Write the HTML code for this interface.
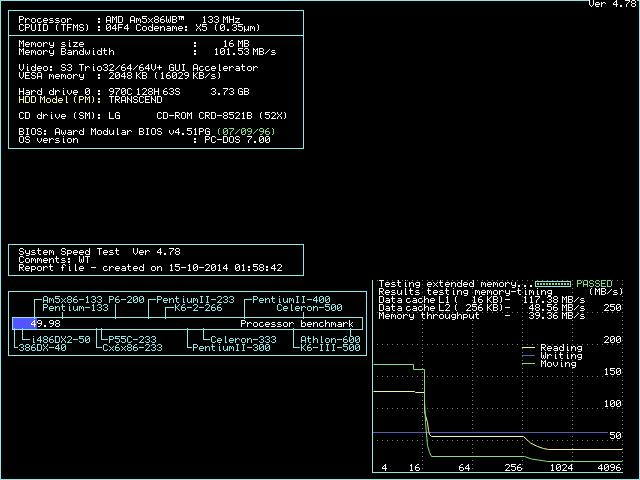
<!DOCTYPE html><html><head><meta charset="utf-8"><title>System Speed Test</title><style>html,body{margin:0;padding:0;background:#000;overflow:hidden;font-family:"Liberation Mono",monospace}svg{display:block}</style></head><body><svg width="640" height="480" viewBox="0 0 640 480" shape-rendering="crispEdges"><defs><path id="g0" d="M0 0h1v1h-1zM4 0h1v1h-1zM0 1h1v1h-1zM4 1h1v1h-1zM0 2h1v1h-1zM4 2h1v1h-1zM0 3h1v1h-1zM4 3h1v1h-1zM0 4h1v1h-1zM4 4h1v1h-1zM1 5h1v1h-1zM3 5h1v1h-1zM2 6h1v1h-1z"/><path id="g1" d="M1 2h3v1h-3zM0 3h1v1h-1zM4 3h1v1h-1zM0 4h5v1h-5zM0 5h1v1h-1zM1 6h3v1h-3z"/><path id="g2" d="M0 2h1v1h-1zM2 2h2v1h-2zM0 3h2v1h-2zM4 3h1v1h-1zM0 4h1v1h-1zM0 5h1v1h-1zM0 6h1v1h-1z"/><path id="g3" d="M3 0h1v1h-1zM2 1h2v1h-2zM1 2h1v1h-1zM3 2h1v1h-1zM0 3h1v1h-1zM3 3h1v1h-1zM0 4h5v1h-5zM3 5h1v1h-1zM3 6h1v1h-1z"/><path id="g4" d="M1 5h2v1h-2zM1 6h2v1h-2z"/><path id="g5" d="M0 0h5v1h-5zM4 1h1v1h-1zM3 2h1v1h-1zM2 3h1v1h-1zM1 4h1v1h-1zM1 5h1v1h-1zM1 6h1v1h-1z"/><path id="g6" d="M1 0h3v1h-3zM0 1h1v1h-1zM4 1h1v1h-1zM0 2h1v1h-1zM4 2h1v1h-1zM1 3h3v1h-3zM0 4h1v1h-1zM4 4h1v1h-1zM0 5h1v1h-1zM4 5h1v1h-1zM1 6h3v1h-3z"/><path id="g7" d="M0 0h4v1h-4zM0 1h1v1h-1zM4 1h1v1h-1zM0 2h1v1h-1zM4 2h1v1h-1zM0 3h4v1h-4zM0 4h1v1h-1zM0 5h1v1h-1zM0 6h1v1h-1z"/><path id="g8" d="M1 2h3v1h-3zM0 3h1v1h-1zM4 3h1v1h-1zM0 4h1v1h-1zM4 4h1v1h-1zM0 5h1v1h-1zM4 5h1v1h-1zM1 6h3v1h-3z"/><path id="g9" d="M1 2h3v1h-3zM0 3h1v1h-1zM0 4h1v1h-1zM0 5h1v1h-1zM4 5h1v1h-1zM1 6h3v1h-3z"/><path id="g10" d="M1 2h3v1h-3zM0 3h1v1h-1zM1 4h3v1h-3zM4 5h1v1h-1zM0 6h4v1h-4z"/><path id="g11" d="M1 2h2v1h-2zM1 3h2v1h-2zM1 5h2v1h-2zM1 6h2v1h-2z"/><path id="g12" d="M1 0h3v1h-3zM0 1h1v1h-1zM4 1h1v1h-1zM0 2h1v1h-1zM4 2h1v1h-1zM0 3h1v1h-1zM4 3h1v1h-1zM0 4h5v1h-5zM0 5h1v1h-1zM4 5h1v1h-1zM0 6h1v1h-1zM4 6h1v1h-1z"/><path id="g13" d="M0 0h1v1h-1zM4 0h1v1h-1zM0 1h2v1h-2zM3 1h2v1h-2zM0 2h1v1h-1zM2 2h1v1h-1zM4 2h1v1h-1zM0 3h1v1h-1zM2 3h1v1h-1zM4 3h1v1h-1zM0 4h1v1h-1zM4 4h1v1h-1zM0 5h1v1h-1zM4 5h1v1h-1zM0 6h1v1h-1zM4 6h1v1h-1z"/><path id="g14" d="M0 0h4v1h-4zM0 1h1v1h-1zM4 1h1v1h-1zM0 2h1v1h-1zM4 2h1v1h-1zM0 3h1v1h-1zM4 3h1v1h-1zM0 4h1v1h-1zM4 4h1v1h-1zM0 5h1v1h-1zM4 5h1v1h-1zM0 6h4v1h-4z"/><path id="g15" d="M0 2h2v1h-2zM3 2h1v1h-1zM0 3h1v1h-1zM2 3h1v1h-1zM4 3h1v1h-1zM0 4h1v1h-1zM2 4h1v1h-1zM4 4h1v1h-1zM0 5h1v1h-1zM4 5h1v1h-1zM0 6h1v1h-1zM4 6h1v1h-1z"/><path id="g16" d="M0 0h5v1h-5zM0 1h1v1h-1zM0 2h4v1h-4zM4 3h1v1h-1zM4 4h1v1h-1zM0 5h1v1h-1zM4 5h1v1h-1zM1 6h3v1h-3z"/><path id="g17" d="M0 2h1v1h-1zM4 2h1v1h-1zM1 3h1v1h-1zM3 3h1v1h-1zM2 4h1v1h-1zM1 5h1v1h-1zM3 5h1v1h-1zM0 6h1v1h-1zM4 6h1v1h-1z"/><path id="g18" d="M2 0h2v1h-2zM1 1h1v1h-1zM0 2h1v1h-1zM0 3h4v1h-4zM0 4h1v1h-1zM4 4h1v1h-1zM0 5h1v1h-1zM4 5h1v1h-1zM1 6h3v1h-3z"/><path id="g19" d="M0 0h1v1h-1zM4 0h1v1h-1zM0 1h1v1h-1zM4 1h1v1h-1zM0 2h1v1h-1zM4 2h1v1h-1zM0 3h1v1h-1zM2 3h1v1h-1zM4 3h1v1h-1zM0 4h1v1h-1zM2 4h1v1h-1zM4 4h1v1h-1zM0 5h1v1h-1zM2 5h1v1h-1zM4 5h1v1h-1zM1 6h1v1h-1zM3 6h1v1h-1z"/><path id="g20" d="M0 0h4v1h-4zM0 1h1v1h-1zM4 1h1v1h-1zM0 2h1v1h-1zM4 2h1v1h-1zM0 3h4v1h-4zM0 4h1v1h-1zM4 4h1v1h-1zM0 5h1v1h-1zM4 5h1v1h-1zM0 6h4v1h-4z"/><path id="g21" d="M0 0h6v1h-6zM1 1h1v1h-1zM3 1h3v1h-3zM1 2h1v1h-1zM3 2h1v1h-1zM5 2h1v1h-1zM1 3h1v1h-1zM3 3h1v1h-1zM5 3h1v1h-1z"/><path id="g22" d="M2 0h1v1h-1zM1 1h2v1h-2zM2 2h1v1h-1zM2 3h1v1h-1zM2 4h1v1h-1zM2 5h1v1h-1zM1 6h3v1h-3z"/><path id="g23" d="M1 0h3v1h-3zM0 1h1v1h-1zM4 1h1v1h-1zM4 2h1v1h-1zM2 3h2v1h-2zM4 4h1v1h-1zM0 5h1v1h-1zM4 5h1v1h-1zM1 6h3v1h-3z"/><path id="g24" d="M0 0h1v1h-1zM4 0h1v1h-1zM0 1h1v1h-1zM4 1h1v1h-1zM0 2h1v1h-1zM4 2h1v1h-1zM0 3h5v1h-5zM0 4h1v1h-1zM4 4h1v1h-1zM0 5h1v1h-1zM4 5h1v1h-1zM0 6h1v1h-1zM4 6h1v1h-1z"/><path id="g25" d="M0 2h5v1h-5zM3 3h1v1h-1zM2 4h1v1h-1zM1 5h1v1h-1zM0 6h5v1h-5z"/><path id="g26" d="M1 0h3v1h-3zM0 1h1v1h-1zM4 1h1v1h-1zM0 2h1v1h-1zM0 3h1v1h-1zM0 4h1v1h-1zM0 5h1v1h-1zM4 5h1v1h-1zM1 6h3v1h-3z"/><path id="g27" d="M0 0h1v1h-1zM4 0h1v1h-1zM0 1h1v1h-1zM4 1h1v1h-1zM0 2h1v1h-1zM4 2h1v1h-1zM0 3h1v1h-1zM4 3h1v1h-1zM0 4h1v1h-1zM4 4h1v1h-1zM0 5h1v1h-1zM4 5h1v1h-1zM1 6h3v1h-3z"/><path id="g28" d="M1 0h3v1h-3zM2 1h1v1h-1zM2 2h1v1h-1zM2 3h1v1h-1zM2 4h1v1h-1zM2 5h1v1h-1zM1 6h3v1h-3z"/><path id="g29" d="M2 0h1v1h-1zM1 1h1v1h-1zM1 2h1v1h-1zM1 3h1v1h-1zM1 4h1v1h-1zM1 5h1v1h-1zM2 6h1v1h-1z"/><path id="g30" d="M0 0h5v1h-5zM2 1h1v1h-1zM2 2h1v1h-1zM2 3h1v1h-1zM2 4h1v1h-1zM2 5h1v1h-1zM2 6h1v1h-1z"/><path id="g31" d="M0 0h5v1h-5zM0 1h1v1h-1zM0 2h1v1h-1zM0 3h4v1h-4zM0 4h1v1h-1zM0 5h1v1h-1zM0 6h1v1h-1z"/><path id="g32" d="M1 0h3v1h-3zM0 1h1v1h-1zM4 1h1v1h-1zM0 2h1v1h-1zM1 3h3v1h-3zM4 4h1v1h-1zM0 5h1v1h-1zM4 5h1v1h-1zM1 6h3v1h-3z"/><path id="g33" d="M1 0h1v1h-1zM2 1h1v1h-1zM2 2h1v1h-1zM2 3h1v1h-1zM2 4h1v1h-1zM2 5h1v1h-1zM1 6h1v1h-1z"/><path id="g34" d="M1 0h3v1h-3zM0 1h1v1h-1zM4 1h1v1h-1zM0 2h1v1h-1zM3 2h2v1h-2zM0 3h1v1h-1zM2 3h1v1h-1zM4 3h1v1h-1zM0 4h2v1h-2zM4 4h1v1h-1zM0 5h1v1h-1zM4 5h1v1h-1zM1 6h3v1h-3z"/><path id="g35" d="M4 0h1v1h-1zM4 1h1v1h-1zM1 2h2v1h-2zM4 2h1v1h-1zM0 3h1v1h-1zM3 3h2v1h-2zM0 4h1v1h-1zM4 4h1v1h-1zM0 5h1v1h-1zM4 5h1v1h-1zM1 6h4v1h-4z"/><path id="g36" d="M0 2h1v1h-1zM2 2h2v1h-2zM0 3h2v1h-2zM4 3h1v1h-1zM0 4h1v1h-1zM4 4h1v1h-1zM0 5h1v1h-1zM4 5h1v1h-1zM0 6h1v1h-1zM4 6h1v1h-1z"/><path id="g37" d="M1 2h3v1h-3zM4 3h1v1h-1zM1 4h4v1h-4zM0 5h1v1h-1zM4 5h1v1h-1zM1 6h4v1h-4z"/><path id="g38" d="M0 0h1v1h-1zM4 0h1v1h-1zM0 1h1v1h-1zM4 1h1v1h-1zM1 2h1v1h-1zM3 2h1v1h-1zM2 3h1v1h-1zM1 4h1v1h-1zM3 4h1v1h-1zM0 5h1v1h-1zM4 5h1v1h-1zM0 6h1v1h-1zM4 6h1v1h-1z"/><path id="g39" d="M0 2h1v1h-1zM4 2h1v1h-1zM0 3h1v1h-1zM4 3h1v1h-1zM0 4h1v1h-1zM4 4h1v1h-1zM0 5h2v1h-2zM3 5h2v1h-2zM0 6h1v1h-1zM2 6h1v1h-1zM4 6h1v1h-1zM0 7h1v1h-1z"/><path id="g40" d="M0 2h1v1h-1zM4 2h1v1h-1zM0 3h1v1h-1zM4 3h1v1h-1zM0 4h1v1h-1zM4 4h1v1h-1zM1 5h4v1h-4zM4 6h1v1h-1zM1 7h3v1h-3z"/><path id="g41" d="M2 0h1v1h-1zM2 2h1v1h-1zM2 3h1v1h-1zM2 4h1v1h-1zM2 5h1v1h-1zM2 6h2v1h-2z"/><path id="g42" d="M0 2h1v1h-1zM4 2h1v1h-1zM0 3h1v1h-1zM4 3h1v1h-1zM0 4h1v1h-1zM2 4h1v1h-1zM4 4h1v1h-1zM0 5h1v1h-1zM2 5h1v1h-1zM4 5h1v1h-1zM1 6h1v1h-1zM3 6h1v1h-1z"/><path id="g43" d="M1 0h1v1h-1zM1 1h1v1h-1zM0 2h4v1h-4zM1 3h1v1h-1zM1 4h1v1h-1zM1 5h1v1h-1zM2 6h2v1h-2z"/><path id="g44" d="M0 0h1v1h-1zM0 1h1v1h-1zM0 2h1v1h-1zM2 2h2v1h-2zM0 3h2v1h-2zM4 3h1v1h-1zM0 4h1v1h-1zM4 4h1v1h-1zM0 5h1v1h-1zM4 5h1v1h-1zM0 6h1v1h-1zM4 6h1v1h-1z"/><path id="g45" d="M4 1h1v1h-1zM3 2h1v1h-1zM2 3h1v1h-1zM1 4h1v1h-1zM0 5h1v1h-1z"/><path id="g46" d="M1 0h3v1h-3zM0 1h1v1h-1zM4 1h1v1h-1zM4 2h1v1h-1zM3 3h1v1h-1zM2 4h1v1h-1zM1 5h1v1h-1zM0 6h5v1h-5z"/><path id="g47" d="M2 1h1v1h-1zM2 2h1v1h-1zM0 3h5v1h-5zM2 4h1v1h-1zM2 5h1v1h-1z"/><path id="g48" d="M1 0h3v1h-3zM0 1h1v1h-1zM4 1h1v1h-1zM0 2h1v1h-1zM0 3h1v1h-1zM2 3h3v1h-3zM0 4h1v1h-1zM4 4h1v1h-1zM0 5h1v1h-1zM4 5h1v1h-1zM1 6h4v1h-4z"/><path id="g49" d="M2 0h1v1h-1zM2 1h1v1h-1zM2 2h1v1h-1zM2 3h1v1h-1zM2 4h1v1h-1zM2 5h1v1h-1zM2 6h2v1h-2z"/><path id="g50" d="M0 0h5v1h-5zM0 1h1v1h-1zM0 2h1v1h-1zM0 3h4v1h-4zM0 4h1v1h-1zM0 5h1v1h-1zM0 6h5v1h-5z"/><path id="g51" d="M0 0h1v1h-1zM4 0h1v1h-1zM0 1h1v1h-1zM3 1h1v1h-1zM0 2h1v1h-1zM2 2h1v1h-1zM0 3h2v1h-2zM0 4h1v1h-1zM2 4h1v1h-1zM0 5h1v1h-1zM3 5h1v1h-1zM0 6h1v1h-1zM4 6h1v1h-1z"/><path id="g52" d="M1 0h3v1h-3zM0 1h1v1h-1zM4 1h1v1h-1zM0 2h1v1h-1zM4 2h1v1h-1zM1 3h4v1h-4zM4 4h1v1h-1zM3 5h1v1h-1zM1 6h2v1h-2z"/><path id="g53" d="M0 2h1v1h-1zM4 2h1v1h-1zM0 3h1v1h-1zM4 3h1v1h-1zM0 4h1v1h-1zM4 4h1v1h-1zM1 5h1v1h-1zM3 5h1v1h-1zM2 6h1v1h-1z"/><path id="g54" d="M0 0h4v1h-4zM0 1h1v1h-1zM4 1h1v1h-1zM0 2h1v1h-1zM4 2h1v1h-1zM0 3h4v1h-4zM0 4h1v1h-1zM2 4h1v1h-1zM0 5h1v1h-1zM3 5h1v1h-1zM0 6h1v1h-1zM4 6h1v1h-1z"/><path id="g55" d="M0 0h1v1h-1zM4 0h1v1h-1zM0 1h1v1h-1zM4 1h1v1h-1zM0 2h2v1h-2zM4 2h1v1h-1zM0 3h1v1h-1zM2 3h1v1h-1zM4 3h1v1h-1zM0 4h1v1h-1zM3 4h2v1h-2zM0 5h1v1h-1zM4 5h1v1h-1zM0 6h1v1h-1zM4 6h1v1h-1z"/><path id="g56" d="M0 0h1v1h-1zM0 1h1v1h-1zM0 2h1v1h-1zM0 3h1v1h-1zM0 4h1v1h-1zM0 5h1v1h-1zM0 6h5v1h-5z"/><path id="g57" d="M0 3h5v1h-5z"/><path id="g58" d="M1 0h3v1h-3zM0 1h1v1h-1zM4 1h1v1h-1zM0 2h1v1h-1zM4 2h1v1h-1zM0 3h1v1h-1zM4 3h1v1h-1zM0 4h1v1h-1zM4 4h1v1h-1zM0 5h1v1h-1zM4 5h1v1h-1zM1 6h3v1h-3z"/><path id="g59" d="M0 2h1v1h-1zM4 2h1v1h-1zM0 3h1v1h-1zM4 3h1v1h-1zM0 4h1v1h-1zM4 4h1v1h-1zM0 5h1v1h-1zM3 5h2v1h-2zM1 6h2v1h-2zM4 6h1v1h-1z"/><path id="g60" d="M0 2h4v1h-4zM0 3h1v1h-1zM4 3h1v1h-1zM0 4h1v1h-1zM4 4h1v1h-1zM0 5h4v1h-4zM0 6h1v1h-1zM0 7h1v1h-1z"/><path id="g61" d="M2 0h2v1h-2zM1 1h1v1h-1zM4 1h1v1h-1zM1 2h1v1h-1zM0 3h3v1h-3zM1 4h1v1h-1zM1 5h1v1h-1zM1 6h1v1h-1z"/><path id="g62" d="M0 0h1v1h-1zM0 1h1v1h-1zM0 2h1v1h-1zM2 2h2v1h-2zM0 3h2v1h-2zM4 3h1v1h-1zM0 4h1v1h-1zM4 4h1v1h-1zM0 5h1v1h-1zM4 5h1v1h-1zM0 6h4v1h-4z"/><path id="g63" d="M0 0h1v1h-1zM0 1h1v1h-1zM0 2h1v1h-1zM3 2h1v1h-1zM0 3h1v1h-1zM2 3h1v1h-1zM0 4h2v1h-2zM0 5h1v1h-1zM2 5h1v1h-1zM0 6h1v1h-1zM3 6h1v1h-1z"/><path id="g64" d="M1 2h4v1h-4zM0 3h1v1h-1zM4 3h1v1h-1zM0 4h1v1h-1zM4 4h1v1h-1zM1 5h4v1h-4zM4 6h1v1h-1zM1 7h3v1h-3z"/></defs><rect width="640" height="480" fill="#000"/><rect x="0" y="0" width="640" height="1" fill="#8ee8e8"/><rect x="0" y="479" width="640" height="1" fill="#8ee8e8"/><rect x="0" y="0" width="1" height="480" fill="#8ee8e8"/><rect x="639" y="0" width="1" height="480" fill="#8ee8e8"/><rect x="589" y="0" width="48" height="8" fill="#000"/><rect x="8" y="10" width="296" height="1" fill="#8ee8e8"/><rect x="8" y="148" width="296" height="1" fill="#8ee8e8"/><rect x="8" y="10" width="1" height="139" fill="#8ee8e8"/><rect x="303" y="10" width="1" height="139" fill="#8ee8e8"/><rect x="8" y="35" width="296" height="1" fill="#8ee8e8"/><rect x="8" y="244" width="296" height="1" fill="#8ee8e8"/><rect x="8" y="275" width="296" height="1" fill="#8ee8e8"/><rect x="8" y="244" width="1" height="32" fill="#8ee8e8"/><rect x="303" y="244" width="1" height="32" fill="#8ee8e8"/><rect x="8" y="291" width="359" height="1" fill="#8ee8e8"/><rect x="8" y="355" width="359" height="1" fill="#8ee8e8"/><rect x="8" y="291" width="1" height="65" fill="#8ee8e8"/><rect x="366" y="291" width="1" height="65" fill="#8ee8e8"/><rect x="12" y="317" width="351" height="1" fill="#8ee8e8"/><rect x="12" y="329" width="351" height="1" fill="#8ee8e8"/><rect x="12" y="317" width="1" height="13" fill="#8ee8e8"/><rect x="362" y="317" width="1" height="13" fill="#8ee8e8"/><rect x="13" y="318" width="24" height="11" fill="#5555ff"/><rect x="34" y="299" width="8" height="1" fill="#8ee8e8"/><rect x="34" y="299" width="1" height="20" fill="#8ee8e8"/><rect x="115" y="304" width="1" height="15" fill="#8ee8e8"/><rect x="148" y="299" width="8" height="1" fill="#8ee8e8"/><rect x="148" y="299" width="1" height="20" fill="#8ee8e8"/><rect x="244" y="299" width="8" height="1" fill="#8ee8e8"/><rect x="244" y="299" width="1" height="20" fill="#8ee8e8"/><rect x="62" y="312" width="1" height="7" fill="#8ee8e8"/><rect x="165" y="307" width="9" height="1" fill="#8ee8e8"/><rect x="165" y="307" width="1" height="12" fill="#8ee8e8"/><rect x="303" y="312" width="1" height="7" fill="#8ee8e8"/><rect x="22" y="328" width="1" height="12" fill="#8ee8e8"/><rect x="22" y="339" width="8" height="1" fill="#8ee8e8"/><rect x="101" y="328" width="1" height="12" fill="#8ee8e8"/><rect x="101" y="339" width="7" height="1" fill="#8ee8e8"/><rect x="203" y="328" width="1" height="12" fill="#8ee8e8"/><rect x="203" y="339" width="7" height="1" fill="#8ee8e8"/><rect x="350" y="328" width="1" height="8" fill="#8ee8e8"/><rect x="14" y="328" width="1" height="20" fill="#8ee8e8"/><rect x="14" y="347" width="4" height="1" fill="#8ee8e8"/><rect x="96" y="328" width="1" height="20" fill="#8ee8e8"/><rect x="96" y="347" width="6" height="1" fill="#8ee8e8"/><rect x="187" y="328" width="1" height="20" fill="#8ee8e8"/><rect x="187" y="347" width="5" height="1" fill="#8ee8e8"/><rect x="293" y="328" width="1" height="20" fill="#8ee8e8"/><rect x="293" y="347" width="7" height="1" fill="#8ee8e8"/><rect x="377" y="280" width="1" height="1" fill="#7c827e"/><rect x="382" y="280" width="1" height="1" fill="#7c827e"/><rect x="387" y="280" width="1" height="1" fill="#7c827e"/><rect x="392" y="280" width="1" height="1" fill="#7c827e"/><rect x="397" y="280" width="1" height="1" fill="#7c827e"/><rect x="402" y="280" width="1" height="1" fill="#7c827e"/><rect x="407" y="280" width="1" height="1" fill="#7c827e"/><rect x="412" y="280" width="1" height="1" fill="#7c827e"/><rect x="417" y="280" width="1" height="1" fill="#7c827e"/><rect x="422" y="280" width="1" height="1" fill="#7c827e"/><rect x="427" y="280" width="1" height="1" fill="#7c827e"/><rect x="432" y="280" width="1" height="1" fill="#7c827e"/><rect x="437" y="280" width="1" height="1" fill="#7c827e"/><rect x="442" y="280" width="1" height="1" fill="#7c827e"/><rect x="447" y="280" width="1" height="1" fill="#7c827e"/><rect x="452" y="280" width="1" height="1" fill="#7c827e"/><rect x="457" y="280" width="1" height="1" fill="#7c827e"/><rect x="462" y="280" width="1" height="1" fill="#7c827e"/><rect x="467" y="280" width="1" height="1" fill="#7c827e"/><rect x="472" y="280" width="1" height="1" fill="#7c827e"/><rect x="477" y="280" width="1" height="1" fill="#7c827e"/><rect x="482" y="280" width="1" height="1" fill="#7c827e"/><rect x="487" y="280" width="1" height="1" fill="#7c827e"/><rect x="492" y="280" width="1" height="1" fill="#7c827e"/><rect x="497" y="280" width="1" height="1" fill="#7c827e"/><rect x="502" y="280" width="1" height="1" fill="#7c827e"/><rect x="507" y="280" width="1" height="1" fill="#7c827e"/><rect x="512" y="280" width="1" height="1" fill="#7c827e"/><rect x="517" y="280" width="1" height="1" fill="#7c827e"/><rect x="522" y="280" width="1" height="1" fill="#7c827e"/><rect x="527" y="280" width="1" height="1" fill="#7c827e"/><rect x="532" y="280" width="1" height="1" fill="#7c827e"/><rect x="537" y="280" width="1" height="1" fill="#7c827e"/><rect x="542" y="280" width="1" height="1" fill="#7c827e"/><rect x="547" y="280" width="1" height="1" fill="#7c827e"/><rect x="552" y="280" width="1" height="1" fill="#7c827e"/><rect x="557" y="280" width="1" height="1" fill="#7c827e"/><rect x="562" y="280" width="1" height="1" fill="#7c827e"/><rect x="567" y="280" width="1" height="1" fill="#7c827e"/><rect x="572" y="280" width="1" height="1" fill="#7c827e"/><rect x="577" y="280" width="1" height="1" fill="#7c827e"/><rect x="582" y="280" width="1" height="1" fill="#7c827e"/><rect x="587" y="280" width="1" height="1" fill="#7c827e"/><rect x="592" y="280" width="1" height="1" fill="#7c827e"/><rect x="597" y="280" width="1" height="1" fill="#7c827e"/><rect x="602" y="280" width="1" height="1" fill="#7c827e"/><rect x="607" y="280" width="1" height="1" fill="#7c827e"/><rect x="612" y="280" width="1" height="1" fill="#7c827e"/><rect x="617" y="280" width="1" height="1" fill="#7c827e"/><rect x="622" y="280" width="1" height="1" fill="#7c827e"/><rect x="377" y="312" width="1" height="1" fill="#7c827e"/><rect x="382" y="312" width="1" height="1" fill="#7c827e"/><rect x="387" y="312" width="1" height="1" fill="#7c827e"/><rect x="392" y="312" width="1" height="1" fill="#7c827e"/><rect x="397" y="312" width="1" height="1" fill="#7c827e"/><rect x="402" y="312" width="1" height="1" fill="#7c827e"/><rect x="407" y="312" width="1" height="1" fill="#7c827e"/><rect x="412" y="312" width="1" height="1" fill="#7c827e"/><rect x="417" y="312" width="1" height="1" fill="#7c827e"/><rect x="422" y="312" width="1" height="1" fill="#7c827e"/><rect x="427" y="312" width="1" height="1" fill="#7c827e"/><rect x="432" y="312" width="1" height="1" fill="#7c827e"/><rect x="437" y="312" width="1" height="1" fill="#7c827e"/><rect x="442" y="312" width="1" height="1" fill="#7c827e"/><rect x="447" y="312" width="1" height="1" fill="#7c827e"/><rect x="452" y="312" width="1" height="1" fill="#7c827e"/><rect x="457" y="312" width="1" height="1" fill="#7c827e"/><rect x="462" y="312" width="1" height="1" fill="#7c827e"/><rect x="467" y="312" width="1" height="1" fill="#7c827e"/><rect x="472" y="312" width="1" height="1" fill="#7c827e"/><rect x="477" y="312" width="1" height="1" fill="#7c827e"/><rect x="482" y="312" width="1" height="1" fill="#7c827e"/><rect x="487" y="312" width="1" height="1" fill="#7c827e"/><rect x="492" y="312" width="1" height="1" fill="#7c827e"/><rect x="497" y="312" width="1" height="1" fill="#7c827e"/><rect x="502" y="312" width="1" height="1" fill="#7c827e"/><rect x="507" y="312" width="1" height="1" fill="#7c827e"/><rect x="512" y="312" width="1" height="1" fill="#7c827e"/><rect x="517" y="312" width="1" height="1" fill="#7c827e"/><rect x="522" y="312" width="1" height="1" fill="#7c827e"/><rect x="527" y="312" width="1" height="1" fill="#7c827e"/><rect x="532" y="312" width="1" height="1" fill="#7c827e"/><rect x="537" y="312" width="1" height="1" fill="#7c827e"/><rect x="542" y="312" width="1" height="1" fill="#7c827e"/><rect x="547" y="312" width="1" height="1" fill="#7c827e"/><rect x="552" y="312" width="1" height="1" fill="#7c827e"/><rect x="557" y="312" width="1" height="1" fill="#7c827e"/><rect x="562" y="312" width="1" height="1" fill="#7c827e"/><rect x="567" y="312" width="1" height="1" fill="#7c827e"/><rect x="572" y="312" width="1" height="1" fill="#7c827e"/><rect x="577" y="312" width="1" height="1" fill="#7c827e"/><rect x="582" y="312" width="1" height="1" fill="#7c827e"/><rect x="587" y="312" width="1" height="1" fill="#7c827e"/><rect x="592" y="312" width="1" height="1" fill="#7c827e"/><rect x="597" y="312" width="1" height="1" fill="#7c827e"/><rect x="602" y="312" width="1" height="1" fill="#7c827e"/><rect x="607" y="312" width="1" height="1" fill="#7c827e"/><rect x="612" y="312" width="1" height="1" fill="#7c827e"/><rect x="617" y="312" width="1" height="1" fill="#7c827e"/><rect x="622" y="312" width="1" height="1" fill="#7c827e"/><rect x="377" y="344" width="1" height="1" fill="#7c827e"/><rect x="382" y="344" width="1" height="1" fill="#7c827e"/><rect x="387" y="344" width="1" height="1" fill="#7c827e"/><rect x="392" y="344" width="1" height="1" fill="#7c827e"/><rect x="397" y="344" width="1" height="1" fill="#7c827e"/><rect x="402" y="344" width="1" height="1" fill="#7c827e"/><rect x="407" y="344" width="1" height="1" fill="#7c827e"/><rect x="412" y="344" width="1" height="1" fill="#7c827e"/><rect x="417" y="344" width="1" height="1" fill="#7c827e"/><rect x="422" y="344" width="1" height="1" fill="#7c827e"/><rect x="427" y="344" width="1" height="1" fill="#7c827e"/><rect x="432" y="344" width="1" height="1" fill="#7c827e"/><rect x="437" y="344" width="1" height="1" fill="#7c827e"/><rect x="442" y="344" width="1" height="1" fill="#7c827e"/><rect x="447" y="344" width="1" height="1" fill="#7c827e"/><rect x="452" y="344" width="1" height="1" fill="#7c827e"/><rect x="457" y="344" width="1" height="1" fill="#7c827e"/><rect x="462" y="344" width="1" height="1" fill="#7c827e"/><rect x="467" y="344" width="1" height="1" fill="#7c827e"/><rect x="472" y="344" width="1" height="1" fill="#7c827e"/><rect x="477" y="344" width="1" height="1" fill="#7c827e"/><rect x="482" y="344" width="1" height="1" fill="#7c827e"/><rect x="487" y="344" width="1" height="1" fill="#7c827e"/><rect x="492" y="344" width="1" height="1" fill="#7c827e"/><rect x="497" y="344" width="1" height="1" fill="#7c827e"/><rect x="502" y="344" width="1" height="1" fill="#7c827e"/><rect x="507" y="344" width="1" height="1" fill="#7c827e"/><rect x="512" y="344" width="1" height="1" fill="#7c827e"/><rect x="517" y="344" width="1" height="1" fill="#7c827e"/><rect x="522" y="344" width="1" height="1" fill="#7c827e"/><rect x="527" y="344" width="1" height="1" fill="#7c827e"/><rect x="532" y="344" width="1" height="1" fill="#7c827e"/><rect x="537" y="344" width="1" height="1" fill="#7c827e"/><rect x="542" y="344" width="1" height="1" fill="#7c827e"/><rect x="547" y="344" width="1" height="1" fill="#7c827e"/><rect x="552" y="344" width="1" height="1" fill="#7c827e"/><rect x="557" y="344" width="1" height="1" fill="#7c827e"/><rect x="562" y="344" width="1" height="1" fill="#7c827e"/><rect x="567" y="344" width="1" height="1" fill="#7c827e"/><rect x="572" y="344" width="1" height="1" fill="#7c827e"/><rect x="577" y="344" width="1" height="1" fill="#7c827e"/><rect x="582" y="344" width="1" height="1" fill="#7c827e"/><rect x="587" y="344" width="1" height="1" fill="#7c827e"/><rect x="592" y="344" width="1" height="1" fill="#7c827e"/><rect x="597" y="344" width="1" height="1" fill="#7c827e"/><rect x="602" y="344" width="1" height="1" fill="#7c827e"/><rect x="607" y="344" width="1" height="1" fill="#7c827e"/><rect x="612" y="344" width="1" height="1" fill="#7c827e"/><rect x="617" y="344" width="1" height="1" fill="#7c827e"/><rect x="622" y="344" width="1" height="1" fill="#7c827e"/><rect x="377" y="376" width="1" height="1" fill="#7c827e"/><rect x="382" y="376" width="1" height="1" fill="#7c827e"/><rect x="387" y="376" width="1" height="1" fill="#7c827e"/><rect x="392" y="376" width="1" height="1" fill="#7c827e"/><rect x="397" y="376" width="1" height="1" fill="#7c827e"/><rect x="402" y="376" width="1" height="1" fill="#7c827e"/><rect x="407" y="376" width="1" height="1" fill="#7c827e"/><rect x="412" y="376" width="1" height="1" fill="#7c827e"/><rect x="417" y="376" width="1" height="1" fill="#7c827e"/><rect x="422" y="376" width="1" height="1" fill="#7c827e"/><rect x="427" y="376" width="1" height="1" fill="#7c827e"/><rect x="432" y="376" width="1" height="1" fill="#7c827e"/><rect x="437" y="376" width="1" height="1" fill="#7c827e"/><rect x="442" y="376" width="1" height="1" fill="#7c827e"/><rect x="447" y="376" width="1" height="1" fill="#7c827e"/><rect x="452" y="376" width="1" height="1" fill="#7c827e"/><rect x="457" y="376" width="1" height="1" fill="#7c827e"/><rect x="462" y="376" width="1" height="1" fill="#7c827e"/><rect x="467" y="376" width="1" height="1" fill="#7c827e"/><rect x="472" y="376" width="1" height="1" fill="#7c827e"/><rect x="477" y="376" width="1" height="1" fill="#7c827e"/><rect x="482" y="376" width="1" height="1" fill="#7c827e"/><rect x="487" y="376" width="1" height="1" fill="#7c827e"/><rect x="492" y="376" width="1" height="1" fill="#7c827e"/><rect x="497" y="376" width="1" height="1" fill="#7c827e"/><rect x="502" y="376" width="1" height="1" fill="#7c827e"/><rect x="507" y="376" width="1" height="1" fill="#7c827e"/><rect x="512" y="376" width="1" height="1" fill="#7c827e"/><rect x="517" y="376" width="1" height="1" fill="#7c827e"/><rect x="522" y="376" width="1" height="1" fill="#7c827e"/><rect x="527" y="376" width="1" height="1" fill="#7c827e"/><rect x="532" y="376" width="1" height="1" fill="#7c827e"/><rect x="537" y="376" width="1" height="1" fill="#7c827e"/><rect x="542" y="376" width="1" height="1" fill="#7c827e"/><rect x="547" y="376" width="1" height="1" fill="#7c827e"/><rect x="552" y="376" width="1" height="1" fill="#7c827e"/><rect x="557" y="376" width="1" height="1" fill="#7c827e"/><rect x="562" y="376" width="1" height="1" fill="#7c827e"/><rect x="567" y="376" width="1" height="1" fill="#7c827e"/><rect x="572" y="376" width="1" height="1" fill="#7c827e"/><rect x="577" y="376" width="1" height="1" fill="#7c827e"/><rect x="582" y="376" width="1" height="1" fill="#7c827e"/><rect x="587" y="376" width="1" height="1" fill="#7c827e"/><rect x="592" y="376" width="1" height="1" fill="#7c827e"/><rect x="597" y="376" width="1" height="1" fill="#7c827e"/><rect x="602" y="376" width="1" height="1" fill="#7c827e"/><rect x="607" y="376" width="1" height="1" fill="#7c827e"/><rect x="612" y="376" width="1" height="1" fill="#7c827e"/><rect x="617" y="376" width="1" height="1" fill="#7c827e"/><rect x="622" y="376" width="1" height="1" fill="#7c827e"/><rect x="377" y="408" width="1" height="1" fill="#7c827e"/><rect x="382" y="408" width="1" height="1" fill="#7c827e"/><rect x="387" y="408" width="1" height="1" fill="#7c827e"/><rect x="392" y="408" width="1" height="1" fill="#7c827e"/><rect x="397" y="408" width="1" height="1" fill="#7c827e"/><rect x="402" y="408" width="1" height="1" fill="#7c827e"/><rect x="407" y="408" width="1" height="1" fill="#7c827e"/><rect x="412" y="408" width="1" height="1" fill="#7c827e"/><rect x="417" y="408" width="1" height="1" fill="#7c827e"/><rect x="422" y="408" width="1" height="1" fill="#7c827e"/><rect x="427" y="408" width="1" height="1" fill="#7c827e"/><rect x="432" y="408" width="1" height="1" fill="#7c827e"/><rect x="437" y="408" width="1" height="1" fill="#7c827e"/><rect x="442" y="408" width="1" height="1" fill="#7c827e"/><rect x="447" y="408" width="1" height="1" fill="#7c827e"/><rect x="452" y="408" width="1" height="1" fill="#7c827e"/><rect x="457" y="408" width="1" height="1" fill="#7c827e"/><rect x="462" y="408" width="1" height="1" fill="#7c827e"/><rect x="467" y="408" width="1" height="1" fill="#7c827e"/><rect x="472" y="408" width="1" height="1" fill="#7c827e"/><rect x="477" y="408" width="1" height="1" fill="#7c827e"/><rect x="482" y="408" width="1" height="1" fill="#7c827e"/><rect x="487" y="408" width="1" height="1" fill="#7c827e"/><rect x="492" y="408" width="1" height="1" fill="#7c827e"/><rect x="497" y="408" width="1" height="1" fill="#7c827e"/><rect x="502" y="408" width="1" height="1" fill="#7c827e"/><rect x="507" y="408" width="1" height="1" fill="#7c827e"/><rect x="512" y="408" width="1" height="1" fill="#7c827e"/><rect x="517" y="408" width="1" height="1" fill="#7c827e"/><rect x="522" y="408" width="1" height="1" fill="#7c827e"/><rect x="527" y="408" width="1" height="1" fill="#7c827e"/><rect x="532" y="408" width="1" height="1" fill="#7c827e"/><rect x="537" y="408" width="1" height="1" fill="#7c827e"/><rect x="542" y="408" width="1" height="1" fill="#7c827e"/><rect x="547" y="408" width="1" height="1" fill="#7c827e"/><rect x="552" y="408" width="1" height="1" fill="#7c827e"/><rect x="557" y="408" width="1" height="1" fill="#7c827e"/><rect x="562" y="408" width="1" height="1" fill="#7c827e"/><rect x="567" y="408" width="1" height="1" fill="#7c827e"/><rect x="572" y="408" width="1" height="1" fill="#7c827e"/><rect x="577" y="408" width="1" height="1" fill="#7c827e"/><rect x="582" y="408" width="1" height="1" fill="#7c827e"/><rect x="587" y="408" width="1" height="1" fill="#7c827e"/><rect x="592" y="408" width="1" height="1" fill="#7c827e"/><rect x="597" y="408" width="1" height="1" fill="#7c827e"/><rect x="602" y="408" width="1" height="1" fill="#7c827e"/><rect x="607" y="408" width="1" height="1" fill="#7c827e"/><rect x="612" y="408" width="1" height="1" fill="#7c827e"/><rect x="617" y="408" width="1" height="1" fill="#7c827e"/><rect x="622" y="408" width="1" height="1" fill="#7c827e"/><rect x="377" y="440" width="1" height="1" fill="#7c827e"/><rect x="382" y="440" width="1" height="1" fill="#7c827e"/><rect x="387" y="440" width="1" height="1" fill="#7c827e"/><rect x="392" y="440" width="1" height="1" fill="#7c827e"/><rect x="397" y="440" width="1" height="1" fill="#7c827e"/><rect x="402" y="440" width="1" height="1" fill="#7c827e"/><rect x="407" y="440" width="1" height="1" fill="#7c827e"/><rect x="412" y="440" width="1" height="1" fill="#7c827e"/><rect x="417" y="440" width="1" height="1" fill="#7c827e"/><rect x="422" y="440" width="1" height="1" fill="#7c827e"/><rect x="427" y="440" width="1" height="1" fill="#7c827e"/><rect x="432" y="440" width="1" height="1" fill="#7c827e"/><rect x="437" y="440" width="1" height="1" fill="#7c827e"/><rect x="442" y="440" width="1" height="1" fill="#7c827e"/><rect x="447" y="440" width="1" height="1" fill="#7c827e"/><rect x="452" y="440" width="1" height="1" fill="#7c827e"/><rect x="457" y="440" width="1" height="1" fill="#7c827e"/><rect x="462" y="440" width="1" height="1" fill="#7c827e"/><rect x="467" y="440" width="1" height="1" fill="#7c827e"/><rect x="472" y="440" width="1" height="1" fill="#7c827e"/><rect x="477" y="440" width="1" height="1" fill="#7c827e"/><rect x="482" y="440" width="1" height="1" fill="#7c827e"/><rect x="487" y="440" width="1" height="1" fill="#7c827e"/><rect x="492" y="440" width="1" height="1" fill="#7c827e"/><rect x="497" y="440" width="1" height="1" fill="#7c827e"/><rect x="502" y="440" width="1" height="1" fill="#7c827e"/><rect x="507" y="440" width="1" height="1" fill="#7c827e"/><rect x="512" y="440" width="1" height="1" fill="#7c827e"/><rect x="517" y="440" width="1" height="1" fill="#7c827e"/><rect x="522" y="440" width="1" height="1" fill="#7c827e"/><rect x="527" y="440" width="1" height="1" fill="#7c827e"/><rect x="532" y="440" width="1" height="1" fill="#7c827e"/><rect x="537" y="440" width="1" height="1" fill="#7c827e"/><rect x="542" y="440" width="1" height="1" fill="#7c827e"/><rect x="547" y="440" width="1" height="1" fill="#7c827e"/><rect x="552" y="440" width="1" height="1" fill="#7c827e"/><rect x="557" y="440" width="1" height="1" fill="#7c827e"/><rect x="562" y="440" width="1" height="1" fill="#7c827e"/><rect x="567" y="440" width="1" height="1" fill="#7c827e"/><rect x="572" y="440" width="1" height="1" fill="#7c827e"/><rect x="577" y="440" width="1" height="1" fill="#7c827e"/><rect x="582" y="440" width="1" height="1" fill="#7c827e"/><rect x="587" y="440" width="1" height="1" fill="#7c827e"/><rect x="592" y="440" width="1" height="1" fill="#7c827e"/><rect x="597" y="440" width="1" height="1" fill="#7c827e"/><rect x="602" y="440" width="1" height="1" fill="#7c827e"/><rect x="607" y="440" width="1" height="1" fill="#7c827e"/><rect x="612" y="440" width="1" height="1" fill="#7c827e"/><rect x="617" y="440" width="1" height="1" fill="#7c827e"/><rect x="622" y="440" width="1" height="1" fill="#7c827e"/><rect x="422" y="280" width="1" height="1" fill="#7c827e"/><rect x="422" y="284" width="1" height="1" fill="#7c827e"/><rect x="422" y="288" width="1" height="1" fill="#7c827e"/><rect x="422" y="292" width="1" height="1" fill="#7c827e"/><rect x="422" y="296" width="1" height="1" fill="#7c827e"/><rect x="422" y="300" width="1" height="1" fill="#7c827e"/><rect x="422" y="304" width="1" height="1" fill="#7c827e"/><rect x="422" y="308" width="1" height="1" fill="#7c827e"/><rect x="422" y="312" width="1" height="1" fill="#7c827e"/><rect x="422" y="316" width="1" height="1" fill="#7c827e"/><rect x="422" y="320" width="1" height="1" fill="#7c827e"/><rect x="422" y="324" width="1" height="1" fill="#7c827e"/><rect x="422" y="328" width="1" height="1" fill="#7c827e"/><rect x="422" y="332" width="1" height="1" fill="#7c827e"/><rect x="422" y="336" width="1" height="1" fill="#7c827e"/><rect x="422" y="340" width="1" height="1" fill="#7c827e"/><rect x="422" y="344" width="1" height="1" fill="#7c827e"/><rect x="422" y="348" width="1" height="1" fill="#7c827e"/><rect x="422" y="352" width="1" height="1" fill="#7c827e"/><rect x="422" y="356" width="1" height="1" fill="#7c827e"/><rect x="422" y="360" width="1" height="1" fill="#7c827e"/><rect x="422" y="364" width="1" height="1" fill="#7c827e"/><rect x="422" y="368" width="1" height="1" fill="#7c827e"/><rect x="422" y="372" width="1" height="1" fill="#7c827e"/><rect x="422" y="376" width="1" height="1" fill="#7c827e"/><rect x="422" y="380" width="1" height="1" fill="#7c827e"/><rect x="422" y="384" width="1" height="1" fill="#7c827e"/><rect x="422" y="388" width="1" height="1" fill="#7c827e"/><rect x="422" y="392" width="1" height="1" fill="#7c827e"/><rect x="422" y="396" width="1" height="1" fill="#7c827e"/><rect x="422" y="400" width="1" height="1" fill="#7c827e"/><rect x="422" y="404" width="1" height="1" fill="#7c827e"/><rect x="422" y="408" width="1" height="1" fill="#7c827e"/><rect x="422" y="412" width="1" height="1" fill="#7c827e"/><rect x="422" y="416" width="1" height="1" fill="#7c827e"/><rect x="422" y="420" width="1" height="1" fill="#7c827e"/><rect x="422" y="424" width="1" height="1" fill="#7c827e"/><rect x="422" y="428" width="1" height="1" fill="#7c827e"/><rect x="422" y="432" width="1" height="1" fill="#7c827e"/><rect x="422" y="436" width="1" height="1" fill="#7c827e"/><rect x="422" y="440" width="1" height="1" fill="#7c827e"/><rect x="422" y="444" width="1" height="1" fill="#7c827e"/><rect x="422" y="448" width="1" height="1" fill="#7c827e"/><rect x="422" y="452" width="1" height="1" fill="#7c827e"/><rect x="422" y="456" width="1" height="1" fill="#7c827e"/><rect x="422" y="460" width="1" height="1" fill="#7c827e"/><rect x="422" y="464" width="1" height="1" fill="#7c827e"/><rect x="422" y="468" width="1" height="1" fill="#7c827e"/><rect x="472" y="280" width="1" height="1" fill="#7c827e"/><rect x="472" y="284" width="1" height="1" fill="#7c827e"/><rect x="472" y="288" width="1" height="1" fill="#7c827e"/><rect x="472" y="292" width="1" height="1" fill="#7c827e"/><rect x="472" y="296" width="1" height="1" fill="#7c827e"/><rect x="472" y="300" width="1" height="1" fill="#7c827e"/><rect x="472" y="304" width="1" height="1" fill="#7c827e"/><rect x="472" y="308" width="1" height="1" fill="#7c827e"/><rect x="472" y="312" width="1" height="1" fill="#7c827e"/><rect x="472" y="316" width="1" height="1" fill="#7c827e"/><rect x="472" y="320" width="1" height="1" fill="#7c827e"/><rect x="472" y="324" width="1" height="1" fill="#7c827e"/><rect x="472" y="328" width="1" height="1" fill="#7c827e"/><rect x="472" y="332" width="1" height="1" fill="#7c827e"/><rect x="472" y="336" width="1" height="1" fill="#7c827e"/><rect x="472" y="340" width="1" height="1" fill="#7c827e"/><rect x="472" y="344" width="1" height="1" fill="#7c827e"/><rect x="472" y="348" width="1" height="1" fill="#7c827e"/><rect x="472" y="352" width="1" height="1" fill="#7c827e"/><rect x="472" y="356" width="1" height="1" fill="#7c827e"/><rect x="472" y="360" width="1" height="1" fill="#7c827e"/><rect x="472" y="364" width="1" height="1" fill="#7c827e"/><rect x="472" y="368" width="1" height="1" fill="#7c827e"/><rect x="472" y="372" width="1" height="1" fill="#7c827e"/><rect x="472" y="376" width="1" height="1" fill="#7c827e"/><rect x="472" y="380" width="1" height="1" fill="#7c827e"/><rect x="472" y="384" width="1" height="1" fill="#7c827e"/><rect x="472" y="388" width="1" height="1" fill="#7c827e"/><rect x="472" y="392" width="1" height="1" fill="#7c827e"/><rect x="472" y="396" width="1" height="1" fill="#7c827e"/><rect x="472" y="400" width="1" height="1" fill="#7c827e"/><rect x="472" y="404" width="1" height="1" fill="#7c827e"/><rect x="472" y="408" width="1" height="1" fill="#7c827e"/><rect x="472" y="412" width="1" height="1" fill="#7c827e"/><rect x="472" y="416" width="1" height="1" fill="#7c827e"/><rect x="472" y="420" width="1" height="1" fill="#7c827e"/><rect x="472" y="424" width="1" height="1" fill="#7c827e"/><rect x="472" y="428" width="1" height="1" fill="#7c827e"/><rect x="472" y="432" width="1" height="1" fill="#7c827e"/><rect x="472" y="436" width="1" height="1" fill="#7c827e"/><rect x="472" y="440" width="1" height="1" fill="#7c827e"/><rect x="472" y="444" width="1" height="1" fill="#7c827e"/><rect x="472" y="448" width="1" height="1" fill="#7c827e"/><rect x="472" y="452" width="1" height="1" fill="#7c827e"/><rect x="472" y="456" width="1" height="1" fill="#7c827e"/><rect x="472" y="460" width="1" height="1" fill="#7c827e"/><rect x="472" y="464" width="1" height="1" fill="#7c827e"/><rect x="472" y="468" width="1" height="1" fill="#7c827e"/><rect x="522" y="280" width="1" height="1" fill="#7c827e"/><rect x="522" y="284" width="1" height="1" fill="#7c827e"/><rect x="522" y="288" width="1" height="1" fill="#7c827e"/><rect x="522" y="292" width="1" height="1" fill="#7c827e"/><rect x="522" y="296" width="1" height="1" fill="#7c827e"/><rect x="522" y="300" width="1" height="1" fill="#7c827e"/><rect x="522" y="304" width="1" height="1" fill="#7c827e"/><rect x="522" y="308" width="1" height="1" fill="#7c827e"/><rect x="522" y="312" width="1" height="1" fill="#7c827e"/><rect x="522" y="316" width="1" height="1" fill="#7c827e"/><rect x="522" y="320" width="1" height="1" fill="#7c827e"/><rect x="522" y="324" width="1" height="1" fill="#7c827e"/><rect x="522" y="328" width="1" height="1" fill="#7c827e"/><rect x="522" y="332" width="1" height="1" fill="#7c827e"/><rect x="522" y="336" width="1" height="1" fill="#7c827e"/><rect x="522" y="340" width="1" height="1" fill="#7c827e"/><rect x="522" y="344" width="1" height="1" fill="#7c827e"/><rect x="522" y="348" width="1" height="1" fill="#7c827e"/><rect x="522" y="352" width="1" height="1" fill="#7c827e"/><rect x="522" y="356" width="1" height="1" fill="#7c827e"/><rect x="522" y="360" width="1" height="1" fill="#7c827e"/><rect x="522" y="364" width="1" height="1" fill="#7c827e"/><rect x="522" y="368" width="1" height="1" fill="#7c827e"/><rect x="522" y="372" width="1" height="1" fill="#7c827e"/><rect x="522" y="376" width="1" height="1" fill="#7c827e"/><rect x="522" y="380" width="1" height="1" fill="#7c827e"/><rect x="522" y="384" width="1" height="1" fill="#7c827e"/><rect x="522" y="388" width="1" height="1" fill="#7c827e"/><rect x="522" y="392" width="1" height="1" fill="#7c827e"/><rect x="522" y="396" width="1" height="1" fill="#7c827e"/><rect x="522" y="400" width="1" height="1" fill="#7c827e"/><rect x="522" y="404" width="1" height="1" fill="#7c827e"/><rect x="522" y="408" width="1" height="1" fill="#7c827e"/><rect x="522" y="412" width="1" height="1" fill="#7c827e"/><rect x="522" y="416" width="1" height="1" fill="#7c827e"/><rect x="522" y="420" width="1" height="1" fill="#7c827e"/><rect x="522" y="424" width="1" height="1" fill="#7c827e"/><rect x="522" y="428" width="1" height="1" fill="#7c827e"/><rect x="522" y="432" width="1" height="1" fill="#7c827e"/><rect x="522" y="436" width="1" height="1" fill="#7c827e"/><rect x="522" y="440" width="1" height="1" fill="#7c827e"/><rect x="522" y="444" width="1" height="1" fill="#7c827e"/><rect x="522" y="448" width="1" height="1" fill="#7c827e"/><rect x="522" y="452" width="1" height="1" fill="#7c827e"/><rect x="522" y="456" width="1" height="1" fill="#7c827e"/><rect x="522" y="460" width="1" height="1" fill="#7c827e"/><rect x="522" y="464" width="1" height="1" fill="#7c827e"/><rect x="522" y="468" width="1" height="1" fill="#7c827e"/><rect x="572" y="280" width="1" height="1" fill="#7c827e"/><rect x="572" y="284" width="1" height="1" fill="#7c827e"/><rect x="572" y="288" width="1" height="1" fill="#7c827e"/><rect x="572" y="292" width="1" height="1" fill="#7c827e"/><rect x="572" y="296" width="1" height="1" fill="#7c827e"/><rect x="572" y="300" width="1" height="1" fill="#7c827e"/><rect x="572" y="304" width="1" height="1" fill="#7c827e"/><rect x="572" y="308" width="1" height="1" fill="#7c827e"/><rect x="572" y="312" width="1" height="1" fill="#7c827e"/><rect x="572" y="316" width="1" height="1" fill="#7c827e"/><rect x="572" y="320" width="1" height="1" fill="#7c827e"/><rect x="572" y="324" width="1" height="1" fill="#7c827e"/><rect x="572" y="328" width="1" height="1" fill="#7c827e"/><rect x="572" y="332" width="1" height="1" fill="#7c827e"/><rect x="572" y="336" width="1" height="1" fill="#7c827e"/><rect x="572" y="340" width="1" height="1" fill="#7c827e"/><rect x="572" y="344" width="1" height="1" fill="#7c827e"/><rect x="572" y="348" width="1" height="1" fill="#7c827e"/><rect x="572" y="352" width="1" height="1" fill="#7c827e"/><rect x="572" y="356" width="1" height="1" fill="#7c827e"/><rect x="572" y="360" width="1" height="1" fill="#7c827e"/><rect x="572" y="364" width="1" height="1" fill="#7c827e"/><rect x="572" y="368" width="1" height="1" fill="#7c827e"/><rect x="572" y="372" width="1" height="1" fill="#7c827e"/><rect x="572" y="376" width="1" height="1" fill="#7c827e"/><rect x="572" y="380" width="1" height="1" fill="#7c827e"/><rect x="572" y="384" width="1" height="1" fill="#7c827e"/><rect x="572" y="388" width="1" height="1" fill="#7c827e"/><rect x="572" y="392" width="1" height="1" fill="#7c827e"/><rect x="572" y="396" width="1" height="1" fill="#7c827e"/><rect x="572" y="400" width="1" height="1" fill="#7c827e"/><rect x="572" y="404" width="1" height="1" fill="#7c827e"/><rect x="572" y="408" width="1" height="1" fill="#7c827e"/><rect x="572" y="412" width="1" height="1" fill="#7c827e"/><rect x="572" y="416" width="1" height="1" fill="#7c827e"/><rect x="572" y="420" width="1" height="1" fill="#7c827e"/><rect x="572" y="424" width="1" height="1" fill="#7c827e"/><rect x="572" y="428" width="1" height="1" fill="#7c827e"/><rect x="572" y="432" width="1" height="1" fill="#7c827e"/><rect x="572" y="436" width="1" height="1" fill="#7c827e"/><rect x="572" y="440" width="1" height="1" fill="#7c827e"/><rect x="572" y="444" width="1" height="1" fill="#7c827e"/><rect x="572" y="448" width="1" height="1" fill="#7c827e"/><rect x="572" y="452" width="1" height="1" fill="#7c827e"/><rect x="572" y="456" width="1" height="1" fill="#7c827e"/><rect x="572" y="460" width="1" height="1" fill="#7c827e"/><rect x="572" y="464" width="1" height="1" fill="#7c827e"/><rect x="572" y="468" width="1" height="1" fill="#7c827e"/><rect x="622" y="280" width="1" height="1" fill="#7c827e"/><rect x="622" y="284" width="1" height="1" fill="#7c827e"/><rect x="622" y="288" width="1" height="1" fill="#7c827e"/><rect x="622" y="292" width="1" height="1" fill="#7c827e"/><rect x="622" y="296" width="1" height="1" fill="#7c827e"/><rect x="622" y="300" width="1" height="1" fill="#7c827e"/><rect x="622" y="304" width="1" height="1" fill="#7c827e"/><rect x="622" y="308" width="1" height="1" fill="#7c827e"/><rect x="622" y="312" width="1" height="1" fill="#7c827e"/><rect x="622" y="316" width="1" height="1" fill="#7c827e"/><rect x="622" y="320" width="1" height="1" fill="#7c827e"/><rect x="622" y="324" width="1" height="1" fill="#7c827e"/><rect x="622" y="328" width="1" height="1" fill="#7c827e"/><rect x="622" y="332" width="1" height="1" fill="#7c827e"/><rect x="622" y="336" width="1" height="1" fill="#7c827e"/><rect x="622" y="340" width="1" height="1" fill="#7c827e"/><rect x="622" y="344" width="1" height="1" fill="#7c827e"/><rect x="622" y="348" width="1" height="1" fill="#7c827e"/><rect x="622" y="352" width="1" height="1" fill="#7c827e"/><rect x="622" y="356" width="1" height="1" fill="#7c827e"/><rect x="622" y="360" width="1" height="1" fill="#7c827e"/><rect x="622" y="364" width="1" height="1" fill="#7c827e"/><rect x="622" y="368" width="1" height="1" fill="#7c827e"/><rect x="622" y="372" width="1" height="1" fill="#7c827e"/><rect x="622" y="376" width="1" height="1" fill="#7c827e"/><rect x="622" y="380" width="1" height="1" fill="#7c827e"/><rect x="622" y="384" width="1" height="1" fill="#7c827e"/><rect x="622" y="388" width="1" height="1" fill="#7c827e"/><rect x="622" y="392" width="1" height="1" fill="#7c827e"/><rect x="622" y="396" width="1" height="1" fill="#7c827e"/><rect x="622" y="400" width="1" height="1" fill="#7c827e"/><rect x="622" y="404" width="1" height="1" fill="#7c827e"/><rect x="622" y="408" width="1" height="1" fill="#7c827e"/><rect x="622" y="412" width="1" height="1" fill="#7c827e"/><rect x="622" y="416" width="1" height="1" fill="#7c827e"/><rect x="622" y="420" width="1" height="1" fill="#7c827e"/><rect x="622" y="424" width="1" height="1" fill="#7c827e"/><rect x="622" y="428" width="1" height="1" fill="#7c827e"/><rect x="622" y="432" width="1" height="1" fill="#7c827e"/><rect x="622" y="436" width="1" height="1" fill="#7c827e"/><rect x="622" y="440" width="1" height="1" fill="#7c827e"/><rect x="622" y="444" width="1" height="1" fill="#7c827e"/><rect x="622" y="448" width="1" height="1" fill="#7c827e"/><rect x="622" y="452" width="1" height="1" fill="#7c827e"/><rect x="622" y="456" width="1" height="1" fill="#7c827e"/><rect x="622" y="460" width="1" height="1" fill="#7c827e"/><rect x="622" y="464" width="1" height="1" fill="#7c827e"/><rect x="622" y="468" width="1" height="1" fill="#7c827e"/><rect x="372" y="280" width="1" height="193" fill="#8ee8e8"/><rect x="372" y="472" width="251" height="1" fill="#8ee8e8"/><rect x="373" y="432" width="235" height="1" fill="#5c5cb8"/><rect x="522" y="347" width="13" height="1" fill="#f4f49c"/><rect x="522" y="355" width="13" height="1" fill="#5c5cb8"/><rect x="522" y="363" width="13" height="1" fill="#84de84"/><rect x="535" y="281" width="36" height="1" fill="#8ee8e8"/><rect x="535" y="286" width="36" height="1" fill="#8ee8e8"/><rect x="535" y="281" width="1" height="6" fill="#8ee8e8"/><rect x="570" y="281" width="1" height="6" fill="#8ee8e8"/><rect x="537" y="283" width="2" height="2" fill="#84de84"/><rect x="540" y="283" width="2" height="2" fill="#84de84"/><rect x="543" y="283" width="2" height="2" fill="#84de84"/><rect x="546" y="283" width="2" height="2" fill="#84de84"/><rect x="549" y="283" width="2" height="2" fill="#84de84"/><rect x="552" y="283" width="2" height="2" fill="#84de84"/><rect x="555" y="283" width="2" height="2" fill="#84de84"/><rect x="558" y="283" width="2" height="2" fill="#84de84"/><rect x="561" y="283" width="2" height="2" fill="#84de84"/><rect x="564" y="283" width="2" height="2" fill="#84de84"/><rect x="567" y="283" width="2" height="2" fill="#84de84"/><rect x="610" y="432" width="12" height="8" fill="#000"/><g shape-rendering="geometricPrecision"><polyline points="373.5,391.5 414.5,391.5 415.5,392.5 424.5,392.5 424.5,410.5 425.5,415.5 427.5,422.5 428.5,430.5 429.5,434.5 431.5,436.5 523.5,436.5 530.5,443.0 537.5,446.5 543.5,448.5 548.5,449.5 622.5,449.5" fill="none" stroke="#f4f49c" stroke-width="1"/><polyline points="373.5,364.5 413.5,364.5 413.5,369.5 424.5,369.5 424.5,400.5 425.5,422.5 427.5,445.5 429.5,452.5 431.5,456.5 524.5,456.5 531.5,459.0 543.5,460.8 547.5,461.5 622.5,461.5" fill="none" stroke="#84de84" stroke-width="1"/></g><g fill="#ffffff"><use href="#g0" x="589" y="0"/><use href="#g1" x="595" y="0"/><use href="#g2" x="601" y="0"/><use href="#g3" x="613" y="0"/><use href="#g4" x="619" y="0"/><use href="#g5" x="625" y="0"/><use href="#g6" x="631" y="0"/><use href="#g7" x="19" y="16"/><use href="#g2" x="25" y="16"/><use href="#g8" x="31" y="16"/><use href="#g9" x="37" y="16"/><use href="#g1" x="43" y="16"/><use href="#g10" x="49" y="16"/><use href="#g10" x="55" y="16"/><use href="#g8" x="61" y="16"/><use href="#g2" x="67" y="16"/><use href="#g11" x="97" y="16"/><use href="#g12" x="106" y="16"/><use href="#g13" x="112" y="16"/><use href="#g14" x="118" y="16"/><use href="#g12" x="130" y="16"/><use href="#g15" x="136" y="16"/><use href="#g16" x="142" y="16"/><use href="#g17" x="148" y="16"/><use href="#g6" x="154" y="16"/><use href="#g18" x="160" y="16"/><use href="#g19" x="166" y="16"/><use href="#g20" x="172" y="16"/><use href="#g21" x="178" y="16"/><use href="#g22" x="202" y="16"/><use href="#g23" x="208" y="16"/><use href="#g23" x="214" y="16"/><use href="#g13" x="223" y="16"/><use href="#g24" x="229" y="16"/><use href="#g25" x="235" y="16"/><use href="#g26" x="19" y="24"/><use href="#g7" x="25" y="24"/><use href="#g27" x="31" y="24"/><use href="#g28" x="37" y="24"/><use href="#g14" x="43" y="24"/><use href="#g29" x="55" y="24"/><use href="#g30" x="61" y="24"/><use href="#g31" x="67" y="24"/><use href="#g13" x="73" y="24"/><use href="#g32" x="79" y="24"/><use href="#g33" x="85" y="24"/><use href="#g11" x="97" y="24"/><use href="#g34" x="106" y="24"/><use href="#g3" x="112" y="24"/><use href="#g31" x="118" y="24"/><use href="#g3" x="124" y="24"/><use href="#g26" x="136" y="24"/><use href="#g8" x="142" y="24"/><use href="#g35" x="148" y="24"/><use href="#g1" x="154" y="24"/><use href="#g36" x="160" y="24"/><use href="#g37" x="166" y="24"/><use href="#g15" x="172" y="24"/><use href="#g1" x="178" y="24"/><use href="#g11" x="184" y="24"/><use href="#g38" x="196" y="24"/><use href="#g16" x="202" y="24"/><use href="#g29" x="214" y="24"/><use href="#g34" x="220" y="24"/><use href="#g4" x="226" y="24"/><use href="#g23" x="232" y="24"/><use href="#g16" x="238" y="24"/><use href="#g39" x="244" y="24"/><use href="#g15" x="250" y="24"/><use href="#g33" x="256" y="24"/><use href="#g13" x="19" y="40"/><use href="#g1" x="25" y="40"/><use href="#g15" x="31" y="40"/><use href="#g8" x="37" y="40"/><use href="#g2" x="43" y="40"/><use href="#g40" x="49" y="40"/><use href="#g10" x="61" y="40"/><use href="#g41" x="67" y="40"/><use href="#g25" x="73" y="40"/><use href="#g1" x="79" y="40"/><use href="#g11" x="193" y="40"/><use href="#g22" x="223" y="40"/><use href="#g18" x="229" y="40"/><use href="#g13" x="238" y="40"/><use href="#g20" x="244" y="40"/><use href="#g13" x="19" y="48"/><use href="#g1" x="25" y="48"/><use href="#g15" x="31" y="48"/><use href="#g8" x="37" y="48"/><use href="#g2" x="43" y="48"/><use href="#g40" x="49" y="48"/><use href="#g20" x="61" y="48"/><use href="#g37" x="67" y="48"/><use href="#g36" x="73" y="48"/><use href="#g35" x="79" y="48"/><use href="#g42" x="85" y="48"/><use href="#g41" x="91" y="48"/><use href="#g35" x="97" y="48"/><use href="#g43" x="103" y="48"/><use href="#g44" x="109" y="48"/><use href="#g11" x="193" y="48"/><use href="#g22" x="214" y="48"/><use href="#g34" x="220" y="48"/><use href="#g22" x="226" y="48"/><use href="#g4" x="232" y="48"/><use href="#g16" x="238" y="48"/><use href="#g23" x="244" y="48"/><use href="#g13" x="253" y="48"/><use href="#g20" x="259" y="48"/><use href="#g45" x="265" y="48"/><use href="#g10" x="271" y="48"/><use href="#g0" x="19" y="64"/><use href="#g41" x="25" y="64"/><use href="#g35" x="31" y="64"/><use href="#g1" x="37" y="64"/><use href="#g8" x="43" y="64"/><use href="#g11" x="49" y="64"/><use href="#g32" x="61" y="64"/><use href="#g23" x="67" y="64"/><use href="#g30" x="79" y="64"/><use href="#g2" x="85" y="64"/><use href="#g41" x="91" y="64"/><use href="#g8" x="97" y="64"/><use href="#g23" x="103" y="64"/><use href="#g46" x="109" y="64"/><use href="#g45" x="115" y="64"/><use href="#g18" x="121" y="64"/><use href="#g3" x="127" y="64"/><use href="#g45" x="133" y="64"/><use href="#g18" x="139" y="64"/><use href="#g3" x="145" y="64"/><use href="#g0" x="151" y="64"/><use href="#g47" x="157" y="64"/><use href="#g48" x="169" y="64"/><use href="#g27" x="175" y="64"/><use href="#g28" x="181" y="64"/><use href="#g12" x="193" y="64"/><use href="#g9" x="199" y="64"/><use href="#g9" x="205" y="64"/><use href="#g1" x="211" y="64"/><use href="#g49" x="217" y="64"/><use href="#g1" x="223" y="64"/><use href="#g2" x="229" y="64"/><use href="#g37" x="235" y="64"/><use href="#g43" x="241" y="64"/><use href="#g8" x="247" y="64"/><use href="#g2" x="253" y="64"/><use href="#g0" x="19" y="72"/><use href="#g50" x="25" y="72"/><use href="#g32" x="31" y="72"/><use href="#g12" x="37" y="72"/><use href="#g15" x="49" y="72"/><use href="#g1" x="55" y="72"/><use href="#g15" x="61" y="72"/><use href="#g8" x="67" y="72"/><use href="#g2" x="73" y="72"/><use href="#g40" x="79" y="72"/><use href="#g11" x="97" y="72"/><use href="#g46" x="109" y="72"/><use href="#g34" x="115" y="72"/><use href="#g3" x="121" y="72"/><use href="#g6" x="127" y="72"/><use href="#g51" x="136" y="72"/><use href="#g20" x="142" y="72"/><use href="#g29" x="154" y="72"/><use href="#g22" x="160" y="72"/><use href="#g18" x="166" y="72"/><use href="#g34" x="172" y="72"/><use href="#g46" x="178" y="72"/><use href="#g52" x="184" y="72"/><use href="#g51" x="193" y="72"/><use href="#g20" x="199" y="72"/><use href="#g45" x="205" y="72"/><use href="#g10" x="211" y="72"/><use href="#g33" x="217" y="72"/><use href="#g24" x="19" y="88"/><use href="#g37" x="25" y="88"/><use href="#g2" x="31" y="88"/><use href="#g35" x="37" y="88"/><use href="#g35" x="49" y="88"/><use href="#g2" x="55" y="88"/><use href="#g41" x="61" y="88"/><use href="#g53" x="67" y="88"/><use href="#g1" x="73" y="88"/><use href="#g34" x="85" y="88"/><use href="#g11" x="97" y="88"/><use href="#g52" x="109" y="88"/><use href="#g5" x="115" y="88"/><use href="#g34" x="121" y="88"/><use href="#g26" x="127" y="88"/><use href="#g22" x="136" y="88"/><use href="#g46" x="142" y="88"/><use href="#g6" x="148" y="88"/><use href="#g24" x="154" y="88"/><use href="#g18" x="163" y="88"/><use href="#g23" x="169" y="88"/><use href="#g32" x="175" y="88"/><use href="#g23" x="211" y="88"/><use href="#g4" x="217" y="88"/><use href="#g5" x="223" y="88"/><use href="#g23" x="229" y="88"/><use href="#g48" x="238" y="88"/><use href="#g20" x="244" y="88"/><use href="#g30" x="109" y="96"/><use href="#g54" x="115" y="96"/><use href="#g12" x="121" y="96"/><use href="#g55" x="127" y="96"/><use href="#g32" x="133" y="96"/><use href="#g26" x="139" y="96"/><use href="#g50" x="145" y="96"/><use href="#g55" x="151" y="96"/><use href="#g14" x="157" y="96"/><use href="#g26" x="19" y="112"/><use href="#g14" x="25" y="112"/><use href="#g35" x="37" y="112"/><use href="#g2" x="43" y="112"/><use href="#g41" x="49" y="112"/><use href="#g53" x="55" y="112"/><use href="#g1" x="61" y="112"/><use href="#g29" x="73" y="112"/><use href="#g32" x="79" y="112"/><use href="#g13" x="85" y="112"/><use href="#g33" x="91" y="112"/><use href="#g11" x="97" y="112"/><use href="#g56" x="109" y="112"/><use href="#g48" x="115" y="112"/><use href="#g26" x="157" y="112"/><use href="#g14" x="163" y="112"/><use href="#g57" x="169" y="112"/><use href="#g54" x="175" y="112"/><use href="#g58" x="181" y="112"/><use href="#g13" x="187" y="112"/><use href="#g26" x="199" y="112"/><use href="#g54" x="205" y="112"/><use href="#g14" x="211" y="112"/><use href="#g57" x="217" y="112"/><use href="#g6" x="223" y="112"/><use href="#g16" x="229" y="112"/><use href="#g46" x="235" y="112"/><use href="#g22" x="241" y="112"/><use href="#g20" x="247" y="112"/><use href="#g29" x="259" y="112"/><use href="#g16" x="265" y="112"/><use href="#g46" x="271" y="112"/><use href="#g38" x="277" y="112"/><use href="#g33" x="283" y="112"/><use href="#g20" x="19" y="128"/><use href="#g28" x="25" y="128"/><use href="#g58" x="31" y="128"/><use href="#g32" x="37" y="128"/><use href="#g11" x="43" y="128"/><use href="#g12" x="55" y="128"/><use href="#g42" x="61" y="128"/><use href="#g37" x="67" y="128"/><use href="#g2" x="73" y="128"/><use href="#g35" x="79" y="128"/><use href="#g13" x="91" y="128"/><use href="#g8" x="97" y="128"/><use href="#g35" x="103" y="128"/><use href="#g59" x="109" y="128"/><use href="#g49" x="115" y="128"/><use href="#g37" x="121" y="128"/><use href="#g2" x="127" y="128"/><use href="#g20" x="139" y="128"/><use href="#g28" x="145" y="128"/><use href="#g58" x="151" y="128"/><use href="#g32" x="157" y="128"/><use href="#g53" x="169" y="128"/><use href="#g3" x="175" y="128"/><use href="#g4" x="181" y="128"/><use href="#g16" x="187" y="128"/><use href="#g22" x="193" y="128"/><use href="#g7" x="199" y="128"/><use href="#g48" x="205" y="128"/><use href="#g58" x="19" y="136"/><use href="#g32" x="25" y="136"/><use href="#g53" x="37" y="136"/><use href="#g1" x="43" y="136"/><use href="#g2" x="49" y="136"/><use href="#g10" x="55" y="136"/><use href="#g41" x="61" y="136"/><use href="#g8" x="67" y="136"/><use href="#g36" x="73" y="136"/><use href="#g11" x="193" y="136"/><use href="#g7" x="205" y="136"/><use href="#g26" x="211" y="136"/><use href="#g57" x="217" y="136"/><use href="#g14" x="223" y="136"/><use href="#g58" x="229" y="136"/><use href="#g32" x="235" y="136"/><use href="#g5" x="247" y="136"/><use href="#g4" x="253" y="136"/><use href="#g34" x="259" y="136"/><use href="#g34" x="265" y="136"/><use href="#g32" x="19" y="248"/><use href="#g40" x="25" y="248"/><use href="#g10" x="31" y="248"/><use href="#g43" x="37" y="248"/><use href="#g1" x="43" y="248"/><use href="#g15" x="49" y="248"/><use href="#g32" x="61" y="248"/><use href="#g60" x="67" y="248"/><use href="#g1" x="73" y="248"/><use href="#g1" x="79" y="248"/><use href="#g35" x="85" y="248"/><use href="#g30" x="97" y="248"/><use href="#g1" x="103" y="248"/><use href="#g10" x="109" y="248"/><use href="#g43" x="115" y="248"/><use href="#g0" x="133" y="248"/><use href="#g1" x="139" y="248"/><use href="#g2" x="145" y="248"/><use href="#g3" x="157" y="248"/><use href="#g4" x="163" y="248"/><use href="#g5" x="169" y="248"/><use href="#g6" x="175" y="248"/><use href="#g26" x="19" y="256"/><use href="#g8" x="25" y="256"/><use href="#g15" x="31" y="256"/><use href="#g15" x="37" y="256"/><use href="#g1" x="43" y="256"/><use href="#g36" x="49" y="256"/><use href="#g43" x="55" y="256"/><use href="#g10" x="61" y="256"/><use href="#g11" x="67" y="256"/><use href="#g19" x="79" y="256"/><use href="#g30" x="85" y="256"/><use href="#g54" x="19" y="264"/><use href="#g1" x="25" y="264"/><use href="#g60" x="31" y="264"/><use href="#g8" x="37" y="264"/><use href="#g2" x="43" y="264"/><use href="#g43" x="49" y="264"/><use href="#g61" x="61" y="264"/><use href="#g41" x="67" y="264"/><use href="#g49" x="73" y="264"/><use href="#g1" x="79" y="264"/><use href="#g57" x="91" y="264"/><use href="#g9" x="103" y="264"/><use href="#g2" x="109" y="264"/><use href="#g1" x="115" y="264"/><use href="#g37" x="121" y="264"/><use href="#g43" x="127" y="264"/><use href="#g1" x="133" y="264"/><use href="#g35" x="139" y="264"/><use href="#g8" x="151" y="264"/><use href="#g36" x="157" y="264"/><use href="#g22" x="169" y="264"/><use href="#g16" x="175" y="264"/><use href="#g57" x="181" y="264"/><use href="#g22" x="187" y="264"/><use href="#g34" x="193" y="264"/><use href="#g57" x="199" y="264"/><use href="#g46" x="205" y="264"/><use href="#g34" x="211" y="264"/><use href="#g22" x="217" y="264"/><use href="#g3" x="223" y="264"/><use href="#g34" x="235" y="264"/><use href="#g22" x="241" y="264"/><use href="#g11" x="247" y="264"/><use href="#g16" x="253" y="264"/><use href="#g6" x="259" y="264"/><use href="#g11" x="265" y="264"/><use href="#g3" x="271" y="264"/><use href="#g46" x="277" y="264"/><use href="#g3" x="31" y="320"/><use href="#g52" x="37" y="320"/><use href="#g4" x="43" y="320"/><use href="#g52" x="49" y="320"/><use href="#g6" x="55" y="320"/><use href="#g7" x="241" y="320"/><use href="#g2" x="247" y="320"/><use href="#g8" x="253" y="320"/><use href="#g9" x="259" y="320"/><use href="#g1" x="265" y="320"/><use href="#g10" x="271" y="320"/><use href="#g10" x="277" y="320"/><use href="#g8" x="283" y="320"/><use href="#g2" x="289" y="320"/><use href="#g62" x="301" y="320"/><use href="#g1" x="307" y="320"/><use href="#g36" x="313" y="320"/><use href="#g9" x="319" y="320"/><use href="#g44" x="325" y="320"/><use href="#g15" x="331" y="320"/><use href="#g37" x="337" y="320"/><use href="#g2" x="343" y="320"/><use href="#g63" x="349" y="320"/><use href="#g54" x="541" y="344"/><use href="#g1" x="547" y="344"/><use href="#g37" x="553" y="344"/><use href="#g35" x="559" y="344"/><use href="#g41" x="565" y="344"/><use href="#g36" x="571" y="344"/><use href="#g64" x="577" y="344"/><use href="#g19" x="541" y="352"/><use href="#g2" x="547" y="352"/><use href="#g41" x="553" y="352"/><use href="#g43" x="559" y="352"/><use href="#g41" x="565" y="352"/><use href="#g36" x="571" y="352"/><use href="#g64" x="577" y="352"/><use href="#g13" x="541" y="360"/><use href="#g8" x="547" y="360"/><use href="#g53" x="553" y="360"/><use href="#g41" x="559" y="360"/><use href="#g36" x="565" y="360"/><use href="#g64" x="571" y="360"/><use href="#g30" x="379" y="280"/><use href="#g1" x="385" y="280"/><use href="#g10" x="391" y="280"/><use href="#g43" x="397" y="280"/><use href="#g41" x="403" y="280"/><use href="#g36" x="409" y="280"/><use href="#g64" x="415" y="280"/><use href="#g1" x="427" y="280"/><use href="#g17" x="433" y="280"/><use href="#g43" x="439" y="280"/><use href="#g1" x="445" y="280"/><use href="#g36" x="451" y="280"/><use href="#g35" x="457" y="280"/><use href="#g1" x="463" y="280"/><use href="#g35" x="469" y="280"/><use href="#g15" x="481" y="280"/><use href="#g1" x="487" y="280"/><use href="#g15" x="493" y="280"/><use href="#g8" x="499" y="280"/><use href="#g2" x="505" y="280"/><use href="#g40" x="511" y="280"/><use href="#g4" x="517" y="280"/><use href="#g4" x="523" y="280"/><use href="#g4" x="529" y="280"/><use href="#g54" x="379" y="288"/><use href="#g1" x="385" y="288"/><use href="#g10" x="391" y="288"/><use href="#g59" x="397" y="288"/><use href="#g49" x="403" y="288"/><use href="#g43" x="409" y="288"/><use href="#g10" x="415" y="288"/><use href="#g43" x="427" y="288"/><use href="#g1" x="433" y="288"/><use href="#g10" x="439" y="288"/><use href="#g43" x="445" y="288"/><use href="#g41" x="451" y="288"/><use href="#g36" x="457" y="288"/><use href="#g64" x="463" y="288"/><use href="#g15" x="475" y="288"/><use href="#g1" x="481" y="288"/><use href="#g15" x="487" y="288"/><use href="#g8" x="493" y="288"/><use href="#g2" x="499" y="288"/><use href="#g40" x="505" y="288"/><use href="#g57" x="511" y="288"/><use href="#g43" x="517" y="288"/><use href="#g41" x="523" y="288"/><use href="#g15" x="529" y="288"/><use href="#g41" x="535" y="288"/><use href="#g36" x="541" y="288"/><use href="#g64" x="547" y="288"/><use href="#g29" x="589" y="288"/><use href="#g13" x="595" y="288"/><use href="#g20" x="601" y="288"/><use href="#g45" x="607" y="288"/><use href="#g10" x="613" y="288"/><use href="#g33" x="619" y="288"/><use href="#g14" x="379" y="296"/><use href="#g37" x="385" y="296"/><use href="#g43" x="391" y="296"/><use href="#g37" x="397" y="296"/><use href="#g9" x="406" y="296"/><use href="#g37" x="412" y="296"/><use href="#g9" x="418" y="296"/><use href="#g44" x="424" y="296"/><use href="#g1" x="430" y="296"/><use href="#g56" x="439" y="296"/><use href="#g22" x="445" y="296"/><use href="#g29" x="454" y="296"/><use href="#g22" x="472" y="296"/><use href="#g18" x="478" y="296"/><use href="#g51" x="487" y="296"/><use href="#g20" x="493" y="296"/><use href="#g33" x="499" y="296"/><use href="#g57" x="505" y="296"/><use href="#g22" x="523" y="296"/><use href="#g22" x="529" y="296"/><use href="#g5" x="535" y="296"/><use href="#g4" x="541" y="296"/><use href="#g23" x="547" y="296"/><use href="#g6" x="553" y="296"/><use href="#g13" x="562" y="296"/><use href="#g20" x="568" y="296"/><use href="#g45" x="574" y="296"/><use href="#g10" x="580" y="296"/><use href="#g14" x="379" y="304"/><use href="#g37" x="385" y="304"/><use href="#g43" x="391" y="304"/><use href="#g37" x="397" y="304"/><use href="#g9" x="406" y="304"/><use href="#g37" x="412" y="304"/><use href="#g9" x="418" y="304"/><use href="#g44" x="424" y="304"/><use href="#g1" x="430" y="304"/><use href="#g56" x="439" y="304"/><use href="#g46" x="445" y="304"/><use href="#g29" x="454" y="304"/><use href="#g46" x="466" y="304"/><use href="#g16" x="472" y="304"/><use href="#g18" x="478" y="304"/><use href="#g51" x="487" y="304"/><use href="#g20" x="493" y="304"/><use href="#g33" x="499" y="304"/><use href="#g57" x="505" y="304"/><use href="#g3" x="529" y="304"/><use href="#g6" x="535" y="304"/><use href="#g4" x="541" y="304"/><use href="#g16" x="547" y="304"/><use href="#g18" x="553" y="304"/><use href="#g13" x="562" y="304"/><use href="#g20" x="568" y="304"/><use href="#g45" x="574" y="304"/><use href="#g10" x="580" y="304"/><use href="#g13" x="379" y="312"/><use href="#g1" x="385" y="312"/><use href="#g15" x="391" y="312"/><use href="#g8" x="397" y="312"/><use href="#g2" x="403" y="312"/><use href="#g40" x="409" y="312"/><use href="#g43" x="421" y="312"/><use href="#g44" x="427" y="312"/><use href="#g2" x="433" y="312"/><use href="#g8" x="439" y="312"/><use href="#g59" x="445" y="312"/><use href="#g64" x="451" y="312"/><use href="#g44" x="457" y="312"/><use href="#g60" x="463" y="312"/><use href="#g59" x="469" y="312"/><use href="#g43" x="475" y="312"/><use href="#g57" x="505" y="312"/><use href="#g23" x="529" y="312"/><use href="#g52" x="535" y="312"/><use href="#g4" x="541" y="312"/><use href="#g23" x="547" y="312"/><use href="#g18" x="553" y="312"/><use href="#g13" x="562" y="312"/><use href="#g20" x="568" y="312"/><use href="#g45" x="574" y="312"/><use href="#g10" x="580" y="312"/><use href="#g46" x="604" y="304"/><use href="#g16" x="610" y="304"/><use href="#g34" x="616" y="304"/><use href="#g46" x="604" y="336"/><use href="#g34" x="610" y="336"/><use href="#g34" x="616" y="336"/><use href="#g22" x="604" y="368"/><use href="#g16" x="610" y="368"/><use href="#g34" x="616" y="368"/><use href="#g22" x="604" y="400"/><use href="#g34" x="610" y="400"/><use href="#g34" x="616" y="400"/><use href="#g16" x="610" y="432"/><use href="#g34" x="616" y="432"/><use href="#g3" x="382" y="464"/><use href="#g22" x="409" y="464"/><use href="#g18" x="415" y="464"/><use href="#g18" x="459" y="464"/><use href="#g3" x="465" y="464"/><use href="#g46" x="505" y="464"/><use href="#g16" x="511" y="464"/><use href="#g18" x="517" y="464"/><use href="#g22" x="550" y="464"/><use href="#g34" x="556" y="464"/><use href="#g46" x="562" y="464"/><use href="#g3" x="568" y="464"/><use href="#g3" x="598" y="464"/><use href="#g34" x="604" y="464"/><use href="#g52" x="610" y="464"/><use href="#g18" x="616" y="464"/></g><g fill="#f4f49c"><use href="#g24" x="19" y="96"/><use href="#g14" x="25" y="96"/><use href="#g14" x="31" y="96"/><use href="#g13" x="40" y="96"/><use href="#g8" x="46" y="96"/><use href="#g35" x="52" y="96"/><use href="#g1" x="58" y="96"/><use href="#g49" x="64" y="96"/><use href="#g29" x="73" y="96"/><use href="#g7" x="79" y="96"/><use href="#g13" x="85" y="96"/><use href="#g33" x="91" y="96"/><use href="#g11" x="97" y="96"/></g><g fill="#84de84"><use href="#g29" x="217" y="128"/><use href="#g34" x="223" y="128"/><use href="#g5" x="229" y="128"/><use href="#g45" x="235" y="128"/><use href="#g34" x="241" y="128"/><use href="#g52" x="247" y="128"/><use href="#g45" x="253" y="128"/><use href="#g52" x="259" y="128"/><use href="#g18" x="265" y="128"/><use href="#g33" x="271" y="128"/><use href="#g7" x="577" y="280"/><use href="#g12" x="583" y="280"/><use href="#g32" x="589" y="280"/><use href="#g32" x="595" y="280"/><use href="#g50" x="601" y="280"/><use href="#g14" x="607" y="280"/></g><g fill="#8ee8e8"><use href="#g12" x="43" y="296"/><use href="#g15" x="49" y="296"/><use href="#g16" x="55" y="296"/><use href="#g17" x="61" y="296"/><use href="#g6" x="67" y="296"/><use href="#g18" x="73" y="296"/><use href="#g57" x="79" y="296"/><use href="#g22" x="85" y="296"/><use href="#g23" x="91" y="296"/><use href="#g23" x="97" y="296"/><use href="#g7" x="109" y="296"/><use href="#g18" x="115" y="296"/><use href="#g57" x="121" y="296"/><use href="#g46" x="127" y="296"/><use href="#g34" x="133" y="296"/><use href="#g34" x="139" y="296"/><use href="#g7" x="157" y="296"/><use href="#g1" x="163" y="296"/><use href="#g36" x="169" y="296"/><use href="#g43" x="175" y="296"/><use href="#g41" x="181" y="296"/><use href="#g59" x="187" y="296"/><use href="#g15" x="193" y="296"/><use href="#g28" x="199" y="296"/><use href="#g28" x="205" y="296"/><use href="#g57" x="211" y="296"/><use href="#g46" x="217" y="296"/><use href="#g23" x="223" y="296"/><use href="#g23" x="229" y="296"/><use href="#g7" x="253" y="296"/><use href="#g1" x="259" y="296"/><use href="#g36" x="265" y="296"/><use href="#g43" x="271" y="296"/><use href="#g41" x="277" y="296"/><use href="#g59" x="283" y="296"/><use href="#g15" x="289" y="296"/><use href="#g28" x="295" y="296"/><use href="#g28" x="301" y="296"/><use href="#g57" x="307" y="296"/><use href="#g3" x="313" y="296"/><use href="#g34" x="319" y="296"/><use href="#g34" x="325" y="296"/><use href="#g7" x="43" y="304"/><use href="#g1" x="49" y="304"/><use href="#g36" x="55" y="304"/><use href="#g43" x="61" y="304"/><use href="#g41" x="67" y="304"/><use href="#g59" x="73" y="304"/><use href="#g15" x="79" y="304"/><use href="#g57" x="85" y="304"/><use href="#g22" x="91" y="304"/><use href="#g23" x="97" y="304"/><use href="#g23" x="103" y="304"/><use href="#g51" x="175" y="304"/><use href="#g18" x="181" y="304"/><use href="#g57" x="187" y="304"/><use href="#g46" x="193" y="304"/><use href="#g57" x="199" y="304"/><use href="#g46" x="205" y="304"/><use href="#g18" x="211" y="304"/><use href="#g18" x="217" y="304"/><use href="#g26" x="277" y="304"/><use href="#g1" x="283" y="304"/><use href="#g49" x="289" y="304"/><use href="#g1" x="295" y="304"/><use href="#g2" x="301" y="304"/><use href="#g8" x="307" y="304"/><use href="#g36" x="313" y="304"/><use href="#g57" x="319" y="304"/><use href="#g16" x="325" y="304"/><use href="#g34" x="331" y="304"/><use href="#g34" x="337" y="304"/><use href="#g41" x="31" y="336"/><use href="#g3" x="37" y="336"/><use href="#g6" x="43" y="336"/><use href="#g18" x="49" y="336"/><use href="#g14" x="55" y="336"/><use href="#g38" x="61" y="336"/><use href="#g46" x="67" y="336"/><use href="#g57" x="73" y="336"/><use href="#g16" x="79" y="336"/><use href="#g34" x="85" y="336"/><use href="#g7" x="109" y="336"/><use href="#g16" x="115" y="336"/><use href="#g16" x="121" y="336"/><use href="#g26" x="127" y="336"/><use href="#g57" x="133" y="336"/><use href="#g46" x="139" y="336"/><use href="#g23" x="145" y="336"/><use href="#g23" x="151" y="336"/><use href="#g26" x="211" y="336"/><use href="#g1" x="217" y="336"/><use href="#g49" x="223" y="336"/><use href="#g1" x="229" y="336"/><use href="#g2" x="235" y="336"/><use href="#g8" x="241" y="336"/><use href="#g36" x="247" y="336"/><use href="#g57" x="253" y="336"/><use href="#g23" x="259" y="336"/><use href="#g23" x="265" y="336"/><use href="#g23" x="271" y="336"/><use href="#g12" x="301" y="336"/><use href="#g43" x="307" y="336"/><use href="#g44" x="313" y="336"/><use href="#g49" x="319" y="336"/><use href="#g8" x="325" y="336"/><use href="#g36" x="331" y="336"/><use href="#g57" x="337" y="336"/><use href="#g18" x="343" y="336"/><use href="#g34" x="349" y="336"/><use href="#g34" x="355" y="336"/><use href="#g23" x="19" y="344"/><use href="#g6" x="25" y="344"/><use href="#g18" x="31" y="344"/><use href="#g14" x="37" y="344"/><use href="#g38" x="43" y="344"/><use href="#g57" x="49" y="344"/><use href="#g3" x="55" y="344"/><use href="#g34" x="61" y="344"/><use href="#g26" x="103" y="344"/><use href="#g17" x="109" y="344"/><use href="#g18" x="115" y="344"/><use href="#g17" x="121" y="344"/><use href="#g6" x="127" y="344"/><use href="#g18" x="133" y="344"/><use href="#g57" x="139" y="344"/><use href="#g46" x="145" y="344"/><use href="#g23" x="151" y="344"/><use href="#g23" x="157" y="344"/><use href="#g7" x="193" y="344"/><use href="#g1" x="199" y="344"/><use href="#g36" x="205" y="344"/><use href="#g43" x="211" y="344"/><use href="#g41" x="217" y="344"/><use href="#g59" x="223" y="344"/><use href="#g15" x="229" y="344"/><use href="#g28" x="235" y="344"/><use href="#g28" x="241" y="344"/><use href="#g57" x="247" y="344"/><use href="#g23" x="253" y="344"/><use href="#g34" x="259" y="344"/><use href="#g34" x="265" y="344"/><use href="#g51" x="301" y="344"/><use href="#g18" x="307" y="344"/><use href="#g57" x="313" y="344"/><use href="#g28" x="319" y="344"/><use href="#g28" x="325" y="344"/><use href="#g28" x="331" y="344"/><use href="#g57" x="337" y="344"/><use href="#g16" x="343" y="344"/><use href="#g34" x="349" y="344"/><use href="#g34" x="355" y="344"/></g></svg></body></html>
